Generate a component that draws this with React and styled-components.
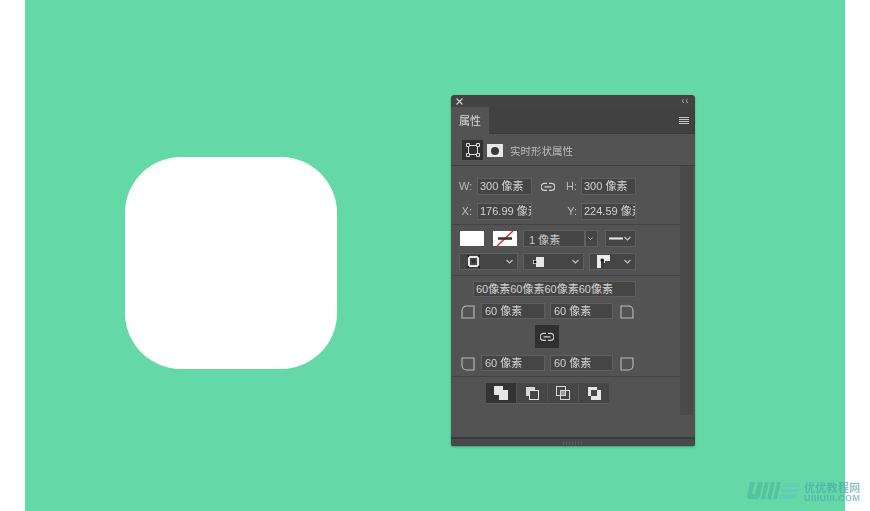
import React from 'react';
import styled, {createGlobalStyle} from 'styled-components';

const ui = `'Liberation Sans', 'Noto Sans CJK SC', sans-serif`;

const Global = createGlobalStyle`
  html, body { margin: 0; padding: 0; background: #fff; }
  body { width: 870px; height: 511px; overflow: hidden; font-family: ${ui}; }
`;

const Page = styled.div`
  position: relative;
  width: 870px;
  height: 511px;
  overflow: hidden;
  background: #fff;
`;
const Canvas = styled.div`
  width: 820px;
  height: 511px;
  margin-left: 25px;
  background: #64d8a6;
  display: flex;
  align-items: flex-start;
`;
const Shape = styled.div`
  flex: none;
  width: 212px;
  height: 212px;
  margin: 157px 0 0 100px;
  border-radius: 56px;
  background: #fff;
`;

const Panel = styled.div`
  flex: none;
  width: 244px;
  height: 351px;
  margin: 95px 0 0 114px;
  display: flex;
  flex-direction: column;
  border-radius: 4px 4px 2px 2px;
  overflow: hidden;
  background: #535353;
  box-shadow: 0 1px 2px rgba(0, 0, 0, 0.3);
  color: #cfcfcf;
  font-size: 11px;
  filter: blur(0.35px);
`;
const TitleBar = styled.div`
  height: 12px;
  padding: 0 6px 0 5px;
  display: flex;
  align-items: center;
  justify-content: space-between;
  background: #434343;
`;
const Collapse = styled.span`
  font-size: 10px;
  line-height: 12px;
  letter-spacing: 0.5px;
  color: #a8a8a8;
`;
const TabBar = styled.div`
  height: 27px;
  display: flex;
  align-items: stretch;
  justify-content: space-between;
  background: #414141;
  border-bottom: 1px solid #3a3a3a;
  box-sizing: border-box;
  padding-right: 6px;
`;
const Tab = styled.div`
  width: 38px;
  margin-bottom: -1px;
  background: #535353;
  font-size: 11px;
  line-height: 28px;
  text-align: center;
  color: #dcdcdc;
`;
const Menu = styled.div`
  align-self: center;
  display: flex;
  flex-direction: column;
  gap: 1px;
  width: 10px;
  & i {
    display: block;
    height: 1px;
    background: #c4c4c4;
  }
`;
const ModeRow = styled.div`
  height: 32px;
  box-sizing: border-box;
  padding: 6px 0 0 11px;
  display: flex;
  align-items: flex-start;
  border-bottom: 1px solid #3f3f3f;
  flex: none;
`;
const ModeButton = styled.div`
  width: 21px;
  height: 20px;
  display: flex;
  align-items: center;
  justify-content: center;
  background: #303030;
`;
const MaskIcon = styled.div`
  width: 16px;
  height: 13px;
  margin: 4px 0 0 4px;
  background: #e8e8e8;
  display: flex;
  align-items: center;
  justify-content: center;
  &::after {
    content: '';
    width: 8px;
    height: 8px;
    border-radius: 50%;
    background: #3b3b3b;
  }
`;
const ModeLabel = styled.span`
  margin: 4px 0 0 7px;
  font-size: 10.5px;
  line-height: 14px;
  color: #bdbdbd;
`;
const Body = styled.div`
  flex: 1;
  display: flex;
  min-height: 0;
`;
const Content = styled.div`
  width: 229px;
  flex: none;
  display: flex;
  flex-direction: column;
`;
const Track = styled.div`
  width: 13px;
  height: 249px;
  flex: none;
  background: #4a4a4a;
`;
const Section = styled.div`
  flex: none;
  height: ${(p) => p.$h}px;
  box-sizing: border-box;
  padding-top: ${(p) => p.$top}px;
  border-bottom: ${(p) => (p.$last ? 'none' : '1px solid #434343')};
  display: flex;
  flex-direction: column;
`;
const SizeRow = styled.div`
  display: grid;
  grid-template-columns: 26px 55px 28px 21px 55px;
  align-items: center;
  height: 17px;
  margin-top: ${(p) => p.$mt || 0}px;
`;
const AxisLabel = styled.label`
  justify-self: ${(p) => (p.$right ? 'end' : 'start')};
  padding: ${(p) => (p.$right ? `0 ${p.$pr || 4}px 2px 0` : '0 0 2px 8px')};
  font-size: 11px;
  color: #bababa;
`;
const Field = styled.div`
  box-sizing: border-box;
  width: ${(p) => (p.$w ? `${p.$w}px` : 'auto')};
  height: ${(p) => p.$hg || 17}px;
  flex: none;
  padding-left: ${(p) => p.$pad ?? 2}px;
  border: 1px solid #5f5f5f;
  background: #454545;
  color: #d2d2d2;
  font-size: 11px;
  line-height: ${(p) => (p.$hg || 17) - 2}px;
  white-space: nowrap;
  overflow: hidden;
`;
const LinkCell = styled.div`
  display: flex;
  justify-content: center;
  padding-left: 4px;
`;
const StrokeRow = styled.div`
  display: flex;
  align-items: center;
  height: 17px;
  padding-left: ${(p) => p.$pl}px;
  margin-top: ${(p) => p.$mt || 0}px;
`;
const Swatch = styled.div`
  flex: none;
  width: 24px;
  height: 15px;
  margin-right: ${(p) => p.$mr}px;
  background: #fff;
`;
const Select = styled.div`
  flex: none;
  box-sizing: border-box;
  width: ${(p) => p.$w}px;
  height: 17px;
  margin-right: ${(p) => p.$mr || 0}px;
  padding: 0 4px 0 ${(p) => p.$pl || 5}px;
  display: flex;
  align-items: center;
  justify-content: ${(p) => (p.$center ? 'center' : 'space-between')};
  border: 1px solid #5f5f5f;
  background: #454545;
  color: #c8c8c8;
  font-size: 11px;
`;
const CornerWide = styled.div`
  padding-left: 22px;
`;
const CornerRow = styled.div`
  display: flex;
  align-items: center;
  height: 16px;
  margin-top: ${(p) => p.$mt}px;
  padding-left: 10px;
`;
const CornerIcon = styled.svg`
  flex: none;
  width: 14px;
  height: 14px;
  margin: ${(p) => (p.$end ? '2px 0 0 7px' : '2px 6px 0 0')};
`;
const FieldGap = styled.div`
  width: 5px;
  flex: none;
`;
const LinkButton = styled.div`
  align-self: flex-start;
  width: 24px;
  height: 23px;
  margin: 6px 0 0 84px;
  display: flex;
  align-items: center;
  justify-content: center;
  background: #303030;
`;
const Ops = styled.div`
  display: flex;
  gap: 1px;
  padding-left: 35px;
`;
const Op = styled.div`
  width: 30px;
  height: 20px;
  display: flex;
  align-items: center;
  justify-content: center;
  background: ${(p) => (p.$on ? '#333' : '#464646')};
  box-shadow: 0 1px 0 #5f5f5f;
`;
const Footer = styled.div`
  margin-top: auto;
  height: 9px;
  flex: none;
  box-sizing: border-box;
  border-top: 2px solid #3a3a3a;
  background: #494949;
  display: flex;
  justify-content: center;
  align-items: center;
`;
const Grip = styled.div`
  width: 20px;
  height: 4px;
  background: repeating-linear-gradient(90deg, #5a5a5a 0 1px, #494949 1px 3px);
`;

const Watermark = styled.div`
  position: absolute;
  left: 747px;
  top: 481px;
  display: flex;
  align-items: flex-start;
  gap: 3px;
  opacity: 0.6;
  filter: blur(0.5px);
`;
const MarkText = styled.div`
  display: flex;
  flex-direction: column;
  padding-top: 2px;
  color: #4a9fb0;
`;
const MarkCn = styled.span`
  font-size: 11px;
  line-height: 11px;
  font-weight: 700;
  letter-spacing: 0.3px;
`;
const MarkEn = styled.span`
  font-size: 9px;
  line-height: 9px;
  letter-spacing: 0.4px;
  font-weight: 700;
`;

const Chain = ({size = 14, color = '#d4d4d4'}) => (
  <svg width={size} height={size * 0.7} viewBox="0 0 14 10" fill="none" stroke={color} strokeWidth="1.3">
    <path d="M6 1.5H3.5a3.5 3.5 0 0 0 0 7H6" />
    <path d="M8 1.5h2.5a3.5 3.5 0 0 1 0 7H8" />
    <path d="M3.5 5h7" />
  </svg>
);

const Caret = () => (
  <svg width="7" height="5" viewBox="0 0 7 5" fill="none" stroke="#c4c4c4" strokeWidth="1.2">
    <path d="M0.5 1l3 3 3-3" />
  </svg>
);

const corners = {
  tl: 'M1 13V5.5A4.5 4.5 0 0 1 5.5 1H13v12z',
  tr: 'M1 1h7.5A4.5 4.5 0 0 1 13 5.5V13H1z',
  bl: 'M1 1h12v12H5.5A4.5 4.5 0 0 1 1 8.5z',
  br: 'M1 1h12v7.5A4.5 4.5 0 0 1 8.5 13H1z',
};

const Corner = ({kind, end}) => (
  <CornerIcon $end={end} viewBox="0 0 14 14" fill="none" stroke="#bcbcbc" strokeWidth="1.1">
    <path d={corners[kind]} />
  </CornerIcon>
);

const OpIcon = ({kind}) => {
  const back = '#d8d8d8';
  return (
    <svg width="16" height="16" viewBox="0 0 16 16">
      {kind === 'add' && <path d="M1 1h9v4h5v10H6v-5H1z" fill="#e6e6e6" />}
      {kind === 'sub' && (
        <>
          <path d="M2 2h9v3H5v6H2z" fill={back} />
          <rect x="5.5" y="5.5" width="9" height="9" fill="none" stroke="#e6e6e6" />
        </>
      )}
      {kind === 'int' && (
        <>
          <rect x="1.5" y="1.5" width="9" height="9" fill="none" stroke={back} />
          <rect x="5.5" y="5.5" width="9" height="9" fill="none" stroke={back} />
          <rect x="6" y="6" width="4" height="4" fill="#9a9a9a" />
        </>
      )}
      {kind === 'exc' && <path d="M2 2h9v3h4v10H5v-4H2zM5 5v6h6V5z" fill="#e6e6e6" fillRule="evenodd" />}
    </svg>
  );
};

export default function App() {
  return (
    <Page>
      <Global />
      <Canvas>
        <Shape />
        <Panel>
          <TitleBar>
            <svg width="7" height="7" viewBox="0 0 7 7" stroke="#cfcfcf" strokeWidth="1.1">
              <path d="M0.5 0.5l6 6M6.5 0.5l-6 6" />
            </svg>
            <Collapse>‹‹</Collapse>
          </TitleBar>
          <TabBar>
            <Tab>属性</Tab>
            <Menu>
              <i />
              <i />
              <i />
              <i />
            </Menu>
          </TabBar>
          <ModeRow>
            <ModeButton>
              <svg width="14" height="14" viewBox="0 0 14 14" fill="none" stroke="#dcdcdc">
                <rect x="2.5" y="2.5" width="9" height="9" />
                <path d="M0.5 0.5h3v3h-3zM10.5 0.5h3v3h-3zM0.5 10.5h3v3h-3zM10.5 10.5h3v3h-3z" fill="#303030" />
              </svg>
            </ModeButton>
            <MaskIcon />
            <ModeLabel>实时形状属性</ModeLabel>
          </ModeRow>
          <Body>
            <Content>
              <Section $h={59} $top={12}>
                <SizeRow>
                  <AxisLabel>W:</AxisLabel>
                  <Field>300 像素</Field>
                  <LinkCell>
                    <Chain />
                  </LinkCell>
                  <AxisLabel $right>H:</AxisLabel>
                  <Field>300 像素</Field>
                </SizeRow>
                <SizeRow $mt={8}>
                  <AxisLabel $right $pr={5}>X:</AxisLabel>
                  <Field>176.99 像素</Field>
                  <span />
                  <AxisLabel $right>Y:</AxisLabel>
                  <Field>224.59 像素</Field>
                </SizeRow>
              </Section>
              <Section $h={51} $top={5}>
                <StrokeRow $pl={9}>
                  <Swatch $mr={9} />
                  <Swatch $mr={6}>
                    <svg width="24" height="15" viewBox="0 0 24 15">
                      <path d="M4 15L20 0" stroke="#d8382f" strokeWidth="1.5" />
                      <path d="M5 7.5h14" stroke="#333" strokeWidth="2.4" />
                    </svg>
                  </Swatch>
                  <Select $w={62}>1 像素</Select>
                  <Select $w={13} $mr={7} $pl={2} $center>
                    <Caret />
                  </Select>
                  <Select $w={31} $pl={3}>
                    <svg width="14" height="3" viewBox="0 0 14 3">
                      <rect width="14" height="2" y="0.5" fill="#ececec" />
                    </svg>
                    <Caret />
                  </Select>
                </StrokeRow>
                <StrokeRow $pl={8} $mt={6}>
                  <Select $w={59} $mr={5} $pl={7}>
                    <svg width="13" height="13" viewBox="0 0 13 13">
                      <rect x="2" y="2" width="9" height="9" rx="1" fill="none" stroke="#e6e6e6" strokeWidth="2" />
                      <rect x="5" y="5" width="3" height="3" fill="#2b2b2b" />
                      <path d="M0 0h2v2H0zM11 0h2v2h-2zM0 11h2v2H0zM11 11h2v2h-2z" fill="#222" />
                    </svg>
                    <Caret />
                  </Select>
                  <Select $w={61} $mr={5} $pl={8}>
                    <svg width="12" height="12" viewBox="0 0 12 12">
                      <path d="M4 1h8v10H4V8H1V4h3z" fill="#e6e6e6" />
                      <circle cx="3" cy="6" r="1.4" fill="#111" />
                    </svg>
                    <Caret />
                  </Select>
                  <Select $w={47} $pl={7}>
                    <svg width="13" height="13" viewBox="0 0 13 13">
                      <path d="M0 0h13v6H8v2H7v5H0z" fill="#ececec" />
                      <rect x="4" y="4" width="3" height="9" fill="#3a3a3a" />
                      <circle cx="5" cy="5" r="1.5" fill="#111" />
                    </svg>
                    <Caret />
                  </Select>
                </StrokeRow>
              </Section>
              <Section $h={101} $top={5}>
                <CornerWide>
                  <Field $w={163} $hg={16}>60像素60像素60像素60像素</Field>
                </CornerWide>
                <CornerRow $mt={6}>
                  <Corner kind="tl" />
                  <Field $w={64} $hg={16} $pad={3}>60 像素</Field>
                  <FieldGap />
                  <Field $w={63} $hg={16} $pad={3}>60 像素</Field>
                  <Corner kind="tr" end />
                </CornerRow>
                <LinkButton>
                  <Chain />
                </LinkButton>
                <CornerRow $mt={7}>
                  <Corner kind="bl" />
                  <Field $w={64} $hg={16} $pad={3}>60 像素</Field>
                  <FieldGap />
                  <Field $w={63} $hg={16} $pad={3}>60 像素</Field>
                  <Corner kind="br" end />
                </CornerRow>
              </Section>
              <Section $h={36} $top={6} $last>
                <Ops>
                  <Op $on>
                    <OpIcon kind="add" />
                  </Op>
                  <Op>
                    <OpIcon kind="sub" />
                  </Op>
                  <Op>
                    <OpIcon kind="int" />
                  </Op>
                  <Op>
                    <OpIcon kind="exc" />
                  </Op>
                </Ops>
              </Section>
            </Content>
            <Track />
          </Body>
          <Footer>
            <Grip />
          </Footer>
        </Panel>
      </Canvas>
      <Watermark>
        <svg width="54" height="19" viewBox="0 0 54 19" fill="#4fb59a">
          <path d="M3 1h5L5 13h3l3-12h5l-3 15-2 2H2L0 16z" />
          <path d="M18 1h4l-4 17h-4zM24 1h4l-4 17h-4zM30 1h4l-4 17h-4z" />
          <path d="M36 2h17l-1 4H35zM35 8h17l-1 3H34zM33 13h17l-1 5H32z" fill="#62c6bf" />
        </svg>
        <MarkText>
          <MarkCn>优优教程网</MarkCn>
          <MarkEn>UIIIUIII.COM</MarkEn>
        </MarkText>
      </Watermark>
    </Page>
  );
}
